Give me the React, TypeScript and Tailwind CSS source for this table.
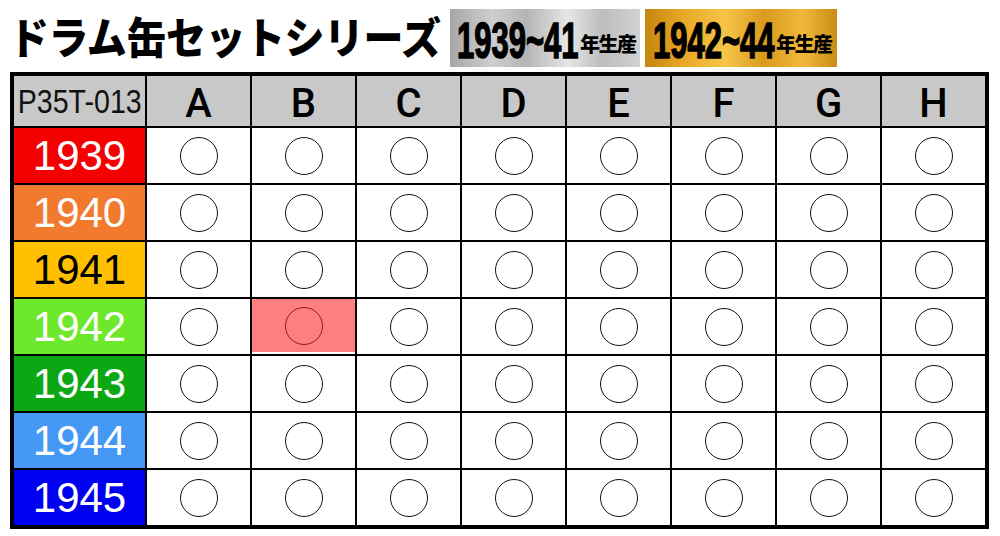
import React from 'react'

const cols = ['A', 'B', 'C', 'D', 'E', 'F', 'G', 'H']

const years = [
    {label: '1939', bg: 'bg-[#f50000]', text: 'text-white'},
    {label: '1940', bg: 'bg-[#f27a2e]', text: 'text-white'},
    {label: '1941', bg: 'bg-[#ffc000]', text: 'text-black'},
    {label: '1942', bg: 'bg-[#6ee82a]', text: 'text-white'},
    {label: '1943', bg: 'bg-[#0ca814]', text: 'text-white'},
    {label: '1944', bg: 'bg-[#4599f5]', text: 'text-white'},
    {label: '1945', bg: 'bg-[#0000f0]', text: 'text-white'},
]

const Badge = ({years, gold}: {years: string; gold?: boolean}) => {
    return (
        <div
            className={
                gold
                    ? 'flex h-[58px] w-[192px] items-start pl-[8px] pt-[7px] bg-[linear-gradient(90deg,#c4860f_0%,#e9a826_20%,#f6c548_42%,#d99a1c_62%,#f0b83a_82%,#c98c14_100%)]'
                    : 'flex h-[58px] w-[190px] items-start pl-[7px] pt-[7px] bg-[linear-gradient(90deg,#a6a6a6_0%,#cfcfcf_22%,#b4b4b4_40%,#e6e6e6_62%,#bdbdbd_80%,#d2d2d2_100%)]'
            }
        >
            <span className="inline-block w-[123px]">
                <span className="inline-block origin-left scale-x-[0.62] whitespace-nowrap font-['Liberation_Sans',sans-serif] text-[50px] font-bold leading-none text-black [-webkit-text-stroke:1.5px_black]">
                    {years}
                </span>
            </span>
            <span className="mt-[18px] whitespace-nowrap font-['Noto_Sans_CJK_JP',sans-serif] text-[20px] font-black leading-none tracking-[-1.5px] text-black">
                年生産
            </span>
        </div>
    )
}

const Circle = ({marked}: {marked?: boolean}) => (
    <div
        className={
            marked
                ? 'h-[38px] w-[38px] rounded-full border-[1.5px] border-[#8a1c1c]'
                : 'h-[38px] w-[38px] rounded-full border-[1.5px] border-[#111]'
        }
    ></div>
)

const App = () => {
    return (
        <div className="h-[536px] w-[1000px] overflow-hidden bg-white font-['Liberation_Sans',sans-serif]">
            <div className="flex h-[72px] items-start pl-[9px]">
                <div className="w-[441px]">
                    <h1 className="mt-[14px] inline-block origin-left scale-x-[0.93] whitespace-nowrap font-['Noto_Sans_CJK_JP',sans-serif] text-[43px] font-black leading-none tracking-[-0.5px] text-black">
                        ドラム缶セットシリーズ
                    </h1>
                </div>
                <div className="mt-[9px] flex gap-[5px]">
                    <Badge years="1939~41" />
                    <Badge years="1942~44" gold />
                </div>
            </div>

            <div className="ml-[10px] grid w-[979px] grid-cols-[131px_repeat(8,103px)] grid-rows-[50px_repeat(7,55px)] gap-[2px] border-4 border-black bg-black">
                <div className="flex items-center justify-center bg-[#c8c8c8]">
                    <span className="inline-block scale-x-[0.84] whitespace-nowrap text-[34px] leading-none text-[#111]">
                        P35T-013
                    </span>
                </div>
                {cols.map((c) => (
                    <div
                        key={c}
                        className="flex items-center justify-center bg-[#c8c8c8] pt-[6px] font-['Roboto',sans-serif] text-[40px] font-medium leading-none text-black"
                    >
                        {c}
                    </div>
                ))}
                {years.map((y, ri) => (
                    <React.Fragment key={y.label}>
                        <div
                            className={`flex items-center justify-center ${y.bg} ${y.text} text-[42px] leading-none`}
                        >
                            {y.label}
                        </div>
                        {cols.map((c, ci) => {
                            const marked = ri === 3 && ci === 1
                            return (
                                <div
                                    key={c}
                                    className="flex items-center justify-center bg-white"
                                >
                                    {marked ? (
                                        <div className="flex h-[53px] w-full items-center justify-center self-start bg-[#ff7f7f]">
                                            <Circle marked />
                                        </div>
                                    ) : (
                                        <Circle />
                                    )}
                                </div>
                            )
                        })}
                    </React.Fragment>
                ))}
            </div>
        </div>
    )
}

export default App
